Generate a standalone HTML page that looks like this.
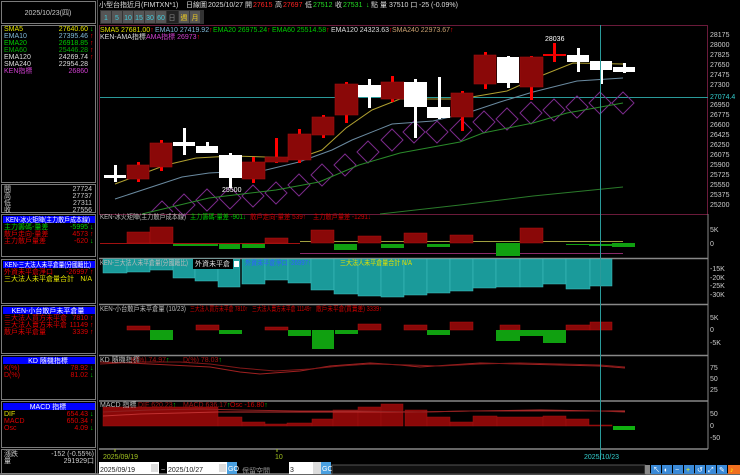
<!DOCTYPE html>
<html><head><meta charset="utf-8"><style>
html,body{margin:0;padding:0;background:#000;width:740px;height:475px;overflow:hidden}
svg{display:block}
text{font-family:"Liberation Sans","Noto Sans CJK TC",sans-serif;font-size:7px}
</style></head><body>
<svg width="740" height="475" viewBox="0 0 740 475" xmlns="http://www.w3.org/2000/svg">
<rect width="740" height="475" fill="#000"/>
<g fill="none" stroke="#7a7a7a" stroke-width="1">
<rect x="1.5" y="1.5" width="94" height="22"/>
<rect x="1.5" y="25.5" width="94" height="157"/>
<rect x="1.5" y="184.5" width="94" height="28"/>
<rect x="1.5" y="214.5" width="94" height="42"/>
<rect x="1.5" y="259.5" width="94" height="44"/>
<rect x="1.5" y="305.5" width="94" height="48"/>
<rect x="1.5" y="355.5" width="94" height="44"/>
<rect x="1.5" y="401.5" width="94" height="46"/>
<rect x="1.5" y="449.5" width="94" height="24"/>
</g>
<line x1="97.5" y1="0" x2="97.5" y2="475" stroke="#555"/>
<text x="48" y="15" fill="#ccc" text-anchor="middle" font-size="6">2025/10/23(四)</text>
<g font-size="5.5">
<text x="4" y="31" fill="#e0e000">SMA5</text><text x="88" y="31" fill="#e0e000" text-anchor="end">27640.60</text><text x="90" y="31" fill="#0c0">↓</text>
<text x="4" y="38" fill="#7fb8d8">EMA10</text><text x="88" y="38" fill="#7fb8d8" text-anchor="end">27395.46</text><text x="90" y="38" fill="#f00">↑</text>
<text x="4" y="45" fill="#0c0">EMA20</text><text x="88" y="45" fill="#0c0" text-anchor="end">26918.85</text><text x="90" y="45" fill="#f00">↑</text>
<text x="4" y="52" fill="#0a0">EMA60</text><text x="88" y="52" fill="#0a0" text-anchor="end">25446.28</text><text x="90" y="52" fill="#f00">↑</text>
<text x="4" y="59" fill="#ddd">EMA120</text><text x="88" y="59" fill="#ddd" text-anchor="end">24269.74</text><text x="90" y="59" fill="#f00">↑</text>
<text x="4" y="66" fill="#ddd">SMA240</text><text x="88" y="66" fill="#ddd" text-anchor="end">22954.28</text>
<text x="4" y="73" fill="#d040d0">KEN指標</text><text x="88" y="73" fill="#d040d0" text-anchor="end">26860</text>
<text x="4" y="191" fill="#ccc">開</text><text x="92" y="191" fill="#ccc" text-anchor="end">27724</text>
<text x="4" y="198" fill="#ccc">高</text><text x="92" y="198" fill="#ccc" text-anchor="end">27737</text>
<text x="4" y="205" fill="#ccc">低</text><text x="92" y="205" fill="#ccc" text-anchor="end">27311</text>
<text x="4" y="212" fill="#ccc">收</text><text x="92" y="212" fill="#ccc" text-anchor="end">27556</text>
</g>
<g font-size="5">
<rect x="3" y="216" width="92" height="7" fill="#0000ff"/><text x="48" y="222" fill="#fff" text-anchor="middle" textLength="84" lengthAdjust="spacingAndGlyphs">KEN-冰火矩陣(主力散戶成本線)</text>
<text x="4" y="229" fill="#0c0">主力籌碼-量差</text><text x="88" y="229" fill="#0c0" text-anchor="end">-5995</text><text x="90" y="229" fill="#0c0">↓</text>
<text x="4" y="236" fill="#d00">散戶走向-量差</text><text x="88" y="236" fill="#d00" text-anchor="end">4573</text><text x="90" y="236" fill="#f00">↑</text>
<text x="4" y="243" fill="#d00">主力散戶量差</text><text x="88" y="243" fill="#d00" text-anchor="end">-620</text><text x="90" y="243" fill="#0c0">↓</text>
<rect x="3" y="261" width="92" height="7" fill="#0000ff"/><text x="48" y="267" fill="#fff" text-anchor="middle" textLength="86" lengthAdjust="spacingAndGlyphs">KEN-三大法人未平倉量(分國籍比)</text>
<text x="4" y="274" fill="#d00">外資未平倉淨口</text><text x="88" y="274" fill="#d00" text-anchor="end">-26997</text><text x="90" y="274" fill="#f00">↑</text>
<text x="4" y="281" fill="#e0e000">三大法人未平倉量合計</text><text x="92" y="281" fill="#e0e000" text-anchor="end">N/A</text>
<rect x="3" y="307" width="92" height="7" fill="#0000ff"/><text x="48" y="313" fill="#fff" text-anchor="middle">KEN-小台散戶未平倉量</text>
<text x="4" y="320" fill="#d00">三大法人買方未平倉</text><text x="88" y="320" fill="#d00" text-anchor="end">7810</text><text x="90" y="320" fill="#f00">↑</text>
<text x="4" y="327" fill="#d00">三大法人賣方未平倉</text><text x="88" y="327" fill="#d00" text-anchor="end">11149</text><text x="90" y="327" fill="#f00">↑</text>
<text x="4" y="334" fill="#d00">散戶未平倉量</text><text x="88" y="334" fill="#d00" text-anchor="end">3339</text><text x="90" y="334" fill="#f00">↑</text>
<rect x="3" y="357" width="92" height="7" fill="#0000ff"/><text x="48" y="363" fill="#fff" text-anchor="middle">KD 隨機指標</text>
<text x="4" y="370" fill="#d00">K(%)</text><text x="88" y="370" fill="#d00" text-anchor="end">78.92</text><text x="90" y="370" fill="#0c0">↓</text>
<text x="4" y="377" fill="#d00">D(%)</text><text x="88" y="377" fill="#d00" text-anchor="end">81.02</text><text x="90" y="377" fill="#0c0">↓</text>
<rect x="3" y="403" width="92" height="7" fill="#0000ff"/><text x="48" y="409" fill="#fff" text-anchor="middle">MACD 指標</text>
<text x="4" y="416" fill="#e0e000">DIF</text><text x="88" y="416" fill="#d00" text-anchor="end">654.43</text><text x="90" y="416" fill="#0c0">↓</text>
<text x="4" y="423" fill="#d00">MACD</text><text x="88" y="423" fill="#d00" text-anchor="end">650.34</text><text x="90" y="423" fill="#f00">↑</text>
<text x="4" y="430" fill="#d00">Osc</text><text x="88" y="430" fill="#d00" text-anchor="end">4.09</text><text x="90" y="430" fill="#0c0">↓</text>
<text x="4" y="456" fill="#ccc">漲跌</text><text x="94" y="456" fill="#ccc" text-anchor="end">-152 (-0.55%)</text>
<text x="4" y="463" fill="#ccc">量</text><text x="94" y="463" fill="#ccc" text-anchor="end">291929口</text>
</g>
<text x="99" y="7" fill="#ddd">小型台指近月(FIMTXN*1)</text>
<text x="186" y="7" fill="#ddd">日線圖</text>
<text x="208" y="7" fill="#ddd">2025/10/27</text>
<text x="245" y="7" fill="#ddd">開</text><text x="253" y="7" fill="#f22">27615</text>
<text x="275" y="7" fill="#ddd">高</text><text x="283" y="7" fill="#f22">27697</text>
<text x="305" y="7" fill="#ddd">低</text><text x="313" y="7" fill="#2d2">27512</text>
<text x="335" y="7" fill="#ddd">收</text><text x="343" y="7" fill="#2d2">27531</text>
<text x="366" y="7" fill="#2d2">↓</text><text x="371" y="7" fill="#ddd">點</text>
<text x="380" y="7" fill="#ddd">量 37510 口</text><text x="419" y="7" fill="#ddd">-25 (-0.09%)</text>
<g font-size="7">
<rect x="100" y="10" width="104" height="14" fill="#333"/>
<g fill="#555"><rect x="101" y="11" width="10" height="12"/><rect x="112" y="11" width="10" height="12"/><rect x="123" y="11" width="10" height="12"/><rect x="134" y="11" width="10" height="12"/><rect x="145" y="11" width="10" height="12"/><rect x="156" y="11" width="10" height="12"/><rect x="179" y="11" width="10" height="12"/><rect x="190" y="11" width="10" height="12"/></g>
<rect x="167" y="11" width="11" height="12" fill="#222"/>
<g fill="#4cd" text-anchor="middle"><text x="106" y="20">1</text><text x="117" y="20">5</text><text x="128" y="20">10</text><text x="139" y="20">15</text><text x="150" y="20">30</text><text x="161" y="20">60</text><text x="172" y="20" fill="#888">日</text><text x="184" y="20" fill="#ec2">週</text><text x="195" y="20" fill="#ec2">月</text></g>
</g>
<rect x="99.5" y="25.5" width="608" height="189" fill="none" stroke="#6a1a3a"/>
<text x="100" y="32" fill="#e0e000" font-size="6">SMA5 27681.00<tspan fill="#f00">↑</tspan></text>
<text x="155" y="32" fill="#7fb8d8" font-size="6">EMA10 27419.92<tspan fill="#f00">↑</tspan></text>
<text x="213" y="32" fill="#0c0" font-size="6">EMA20 26975.24<tspan fill="#f00">↑</tspan></text>
<text x="272" y="32" fill="#0c0" font-size="6">EMA60 25514.58<tspan fill="#f00">↑</tspan></text>
<text x="331" y="32" fill="#ddd" font-size="6">EMA120 24323.63<tspan fill="#f00">↑</tspan></text>
<text x="392" y="32" fill="#c9a070" font-size="6">SMA240 22973.67<tspan fill="#f00">↑</tspan></text>
<text x="100" y="39" fill="#ddd" font-size="6">KEN-AMA指標</text>
<text x="146" y="39" fill="#d040d0" font-size="6">AMA指標 26973<tspan fill="#f00">↑</tspan></text>
<g fill="#ccc" font-size="6">
<text x="710" y="37">28175</text><text x="710" y="47">28000</text><text x="710" y="57">27825</text><text x="710" y="67">27650</text><text x="710" y="77">27475</text><text x="710" y="87">27300</text><text x="710" y="107">26950</text><text x="710" y="117">26775</text><text x="710" y="127">26600</text><text x="710" y="137">26425</text><text x="710" y="147">26250</text><text x="710" y="157">26075</text><text x="710" y="167">25900</text><text x="710" y="177">25725</text><text x="710" y="187">25550</text><text x="710" y="197">25375</text><text x="710" y="207">25200</text>
</g>
<text x="710" y="99" fill="#3cc" font-size="6">27074.4</text>
<line x1="100" y1="97.5" x2="708" y2="97.5" stroke="#2a9a9a"/>
<g fill="none" stroke="#7a2a8a" stroke-width="1">
<path d="M151 212l11-11 11 11M173 205l11-11 11 11 -11 11zM196 200l11-11 11 11 -11 11zM219 198l11-11 11 11 -11 11zM242 196l11-11 11 11 -11 11zM265 193l11-11 11 11 -11 11zM288 185l11-11 11 11 -11 11zM311 175l11-11 11 11 -11 11zM334 165l11-11 11 11 -11 11zM357 152l11-11 11 11 -11 11zM381 140l11-11 11 11 -11 11zM403 132l11-11 11 11 -11 11zM426 132l11-11 11 11 -11 11zM450 130l11-11 11 11 -11 11zM473 122l11-11 11 11 -11 11zM496 119l11-11 11 11 -11 11zM520 113l11-11 11 11 -11 11zM543 110l11-11 11 11 -11 11zM566 107l11-11 11 11 -11 11zM589 103l11-11 11 11 -11 11zM612 103l11-11 11 11 -11 11z"/>
</g>
<polyline fill="none" stroke="#2a7a2a" points="380,214 460,205 533,196 623,187"/>
<polyline fill="none" stroke="#2a8a2a" points="142,214 209,198 276,190 319,182 359,165 400,153 460,142 483,133 533,123 567,113 623,103"/>
<polyline fill="none" stroke="#6a8aa0" points="115,199 182,177 209,173 266,170 299,162 332,150 352,140 392,124 433,121 467,113 500,102 533,92 577,81 623,78"/>
<polyline fill="none" stroke="#b0a030" points="115,184 166,165 196,158 232,156 266,157 299,158 322,150 346,128 372,110 400,99 460,99 507,91 543,75 573,63 623,64"/>
<g fill="#f00">
<rect x="137" y="162" width="3" height="20"/><rect x="160" y="140" width="3" height="31"/><rect x="252" y="157" width="3" height="26"/><rect x="275" y="138" width="3" height="25"/><rect x="298" y="129" width="3" height="34"/><rect x="322" y="115" width="3" height="23"/><rect x="345" y="82" width="3" height="41"/><rect x="391" y="76" width="3" height="26"/><rect x="461" y="91" width="3" height="40"/><rect x="484" y="52" width="3" height="37"/><rect x="530" y="56" width="3" height="44"/><rect x="553" y="43" width="3" height="19"/>
</g>
<g fill="#8a0808" stroke="#a01010" stroke-width="0.6">
<rect x="127" y="165" width="22" height="14"/><rect x="150" y="143" width="22" height="24"/><rect x="242" y="162" width="23" height="17"/><rect x="265" y="157" width="23" height="5"/><rect x="288" y="134" width="23" height="26"/><rect x="312" y="117" width="22" height="18"/><rect x="335" y="84" width="23" height="31"/><rect x="381" y="82" width="23" height="17"/><rect x="451" y="93" width="22" height="24"/><rect x="474" y="55" width="22" height="29"/><rect x="520" y="57" width="23" height="30"/>
</g>
<rect x="543" y="54" width="23" height="2" fill="#e00"/>
<g fill="#fff">
<rect x="114" y="165" width="3" height="17"/><rect x="104" y="175" width="22" height="3"/>
<rect x="183" y="128" width="3" height="27"/><rect x="173" y="142" width="22" height="4"/>
<rect x="206" y="142" width="3" height="11"/><rect x="196" y="146" width="22" height="7"/>
<rect x="229" y="153" width="3" height="35"/><rect x="219" y="155" width="23" height="23"/>
<rect x="368" y="79" width="3" height="29"/><rect x="358" y="85" width="23" height="12"/>
<rect x="414" y="79" width="3" height="59"/><rect x="404" y="82" width="23" height="25"/>
<rect x="438" y="77" width="3" height="42"/><rect x="427" y="107" width="23" height="11"/>
<rect x="507" y="56" width="3" height="32"/><rect x="497" y="57" width="22" height="26"/>
<rect x="577" y="48" width="3" height="24"/><rect x="567" y="55" width="22" height="7"/>
<rect x="600" y="61" width="3" height="23"/><rect x="590" y="61" width="22" height="9"/>
<rect x="623" y="63" width="3" height="10"/><rect x="613" y="67" width="22" height="5"/>
</g>
<text x="222" y="192" fill="#fff" font-size="6">25500</text>
<text x="545" y="41" fill="#fff" font-size="6">28036</text>
<g stroke="#888" stroke-width="1.5"><line x1="99" y1="258.5" x2="708" y2="258.5"/><line x1="99" y1="304.5" x2="708" y2="304.5"/><line x1="99" y1="355.5" x2="708" y2="355.5"/><line x1="99" y1="401" x2="708" y2="401"/><line x1="99" y1="449" x2="708" y2="449"/><line x1="0" y1="474" x2="740" y2="474"/></g>
<line x1="708" y1="214" x2="708" y2="449" stroke="#888"/>
<line x1="300" y1="241.5" x2="623" y2="241.5" stroke="#a0a040"/>
<line x1="300" y1="253.5" x2="623" y2="253.5" stroke="#8a2a6a"/>
<line x1="100" y1="243.5" x2="300" y2="243.5" stroke="#a01010"/>
<g fill="#8a0808" stroke="#b01010" stroke-width="0.5">
<rect x="127" y="232" width="23" height="11"/><rect x="150" y="227" width="23" height="16"/><rect x="265" y="238" width="23" height="5"/><rect x="311" y="230" width="23" height="13"/><rect x="358" y="236" width="23" height="7"/><rect x="404" y="233" width="23" height="10"/><rect x="450" y="235" width="23" height="8"/><rect x="520" y="228" width="23" height="15"/>
</g>
<g fill="#10a010">
<rect x="173" y="244" width="45" height="2"/><rect x="219" y="244" width="21" height="5"/><rect x="242" y="244" width="23" height="4"/><rect x="334" y="244" width="23" height="6"/><rect x="381" y="244" width="23" height="4"/><rect x="427" y="244" width="23" height="3"/><rect x="496" y="243" width="24" height="13"/><rect x="566" y="244" width="23" height="1"/><rect x="589" y="244" width="23" height="2"/><rect x="612" y="243" width="23" height="4"/>
</g>
<text x="100" y="219" fill="#bbb" font-size="5.5" textLength="86" lengthAdjust="spacingAndGlyphs">KEN-冰火矩陣(主力散戶成本線)</text>
<text x="190" y="219" fill="#0c0" font-size="5.5" textLength="56" lengthAdjust="spacingAndGlyphs">主力籌碼-量差 -901↓</text>
<text x="250" y="219" fill="#c00" font-size="5.5" textLength="56" lengthAdjust="spacingAndGlyphs">散戶走向-量差 539↑</text>
<text x="313" y="219" fill="#c00" font-size="5.5" textLength="58" lengthAdjust="spacingAndGlyphs">主力散戶量差 -1291↓</text>
<g fill="#ccc" font-size="6"><text x="710" y="232">5K</text><text x="710" y="246">0</text></g>
<g fill="#1a9a9a" stroke="#40c0c0" stroke-width="0.5">
<rect x="103" y="259" width="24" height="14"/><rect x="127" y="259" width="23" height="13"/><rect x="150" y="259" width="23" height="11"/><rect x="173" y="259" width="22" height="19"/><rect x="195" y="259" width="23" height="22"/><rect x="218" y="259" width="22" height="28"/><rect x="242" y="259" width="23" height="25"/><rect x="265" y="259" width="23" height="21"/><rect x="288" y="259" width="23" height="24"/><rect x="311" y="259" width="23" height="31"/><rect x="334" y="259" width="24" height="35"/><rect x="358" y="259" width="23" height="37"/><rect x="381" y="259" width="23" height="38"/><rect x="404" y="259" width="23" height="36"/><rect x="427" y="259" width="23" height="34"/><rect x="450" y="259" width="23" height="32"/><rect x="473" y="259" width="23" height="29"/><rect x="496" y="259" width="24" height="28"/><rect x="520" y="259" width="23" height="28"/><rect x="543" y="259" width="23" height="25"/><rect x="566" y="259" width="24" height="30"/><rect x="590" y="259" width="22" height="27"/>
</g>
<text x="100" y="265" fill="#bbb" font-size="5.5" textLength="88" lengthAdjust="spacingAndGlyphs">KEN-三大法人未平倉量(分國籍比)</text>
<rect x="193" y="259" width="40" height="10" fill="#000"/><text x="195" y="266" fill="#ddd" font-size="6">外資未平倉</text><rect x="234" y="261" width="5" height="6" fill="#fff"/>
<text x="245" y="265" fill="#3060ff" font-size="5.5" textLength="66" lengthAdjust="spacingAndGlyphs">外資未平倉淨口 -26997↑</text>
<text x="340" y="265" fill="#e0e000" font-size="5.5" textLength="72" lengthAdjust="spacingAndGlyphs">三大法人未平倉量合計 N/A</text>
<g fill="#ccc" font-size="6"><text x="710" y="271">-15K</text><text x="710" y="280">-20K</text><text x="710" y="288">-25K</text><text x="710" y="297">-30K</text></g>
<g fill="#8a0808" stroke="#b01010" stroke-width="0.5">
<rect x="127" y="326" width="23" height="4"/><rect x="196" y="325" width="23" height="5"/><rect x="265" y="327" width="23" height="3"/><rect x="358" y="324" width="23" height="6"/><rect x="404" y="325" width="23" height="5"/><rect x="450" y="322" width="23" height="8"/><rect x="500" y="325" width="20" height="5"/><rect x="566" y="325" width="24" height="5"/><rect x="590" y="322" width="22" height="8"/>
</g>
<g fill="#10a010">
<rect x="150" y="330" width="23" height="10"/><rect x="219" y="330" width="23" height="4"/><rect x="288" y="330" width="23" height="6"/><rect x="312" y="330" width="22" height="19"/><rect x="335" y="330" width="23" height="4"/><rect x="427" y="330" width="23" height="5"/><rect x="496" y="330" width="24" height="11"/><rect x="520" y="330" width="23" height="6"/><rect x="543" y="330" width="23" height="13"/>
</g>
<text x="100" y="311" fill="#bbb" font-size="5.5" textLength="86" lengthAdjust="spacingAndGlyphs">KEN-小台散戶未平倉量 (10/23)</text>
<text x="190" y="311" fill="#c00" font-size="5.5" textLength="58" lengthAdjust="spacingAndGlyphs">三大法人買方未平倉 7810↑</text>
<text x="252" y="311" fill="#c00" font-size="5.5" textLength="60" lengthAdjust="spacingAndGlyphs">三大法人賣方未平倉 11149↑</text>
<text x="316" y="311" fill="#c00" font-size="5.5" textLength="66" lengthAdjust="spacingAndGlyphs">散戶未平倉(買賣差) 3339↑</text>
<g fill="#ccc" font-size="6"><text x="710" y="320">5K</text><text x="710" y="332">0</text><text x="710" y="345">-5K</text></g>
<polyline fill="none" stroke="#a02020" points="100,362 130,363 170,365 210,367 240,372 260,374 300,371 330,366 370,363 400,365 420,367 450,365 480,363 520,364 560,365 600,366 625,368"/>
<polyline fill="none" stroke="#801818" points="100,364 140,362 180,362 210,364 240,368 275,371 310,369 340,366 370,364 410,365 440,366 480,364 520,363 560,364 600,365 625,367"/>
<text x="100" y="362" fill="#bbb" font-size="5.5">KD 隨機指標</text>
<text x="131" y="362" fill="#a01010" font-size="5.5">K(%) 74.97<tspan fill="#0c0">↑</tspan></text>
<text x="183" y="362" fill="#a01010" font-size="5.5">D(%) 78.03<tspan fill="#0c0">↑</tspan></text>
<g fill="#ccc" font-size="6"><text x="710" y="370">75</text><text x="710" y="381">50</text><text x="710" y="392">25</text></g>
<g fill="#8a0808" stroke="#a01010" stroke-width="0.5">
<rect x="103" y="407" width="115" height="19"/><rect x="218" y="417" width="24" height="9"/><rect x="242" y="422" width="23" height="4"/><rect x="265" y="424" width="22" height="2"/><rect x="287" y="423" width="25" height="3"/><rect x="312" y="419" width="21" height="7"/><rect x="333" y="410" width="25" height="16"/><rect x="358" y="407" width="23" height="19"/><rect x="381" y="404" width="22" height="22"/><rect x="405" y="410" width="22" height="16"/><rect x="427" y="417" width="23" height="9"/><rect x="450" y="422" width="23" height="4"/><rect x="473" y="416" width="24" height="10"/><rect x="497" y="417" width="46" height="9"/><rect x="543" y="416" width="23" height="10"/><rect x="566" y="419" width="23" height="7"/><rect x="589" y="425" width="23" height="1"/>
</g>
<rect x="613" y="426" width="22" height="4" fill="#10b010"/>
<polyline fill="none" stroke="#c03030" points="103,416 140,414 180,413 218,412 240,412 300,412 360,412 420,412 470,411 540,410 600,411 625,411"/>
<polyline fill="none" stroke="#902020" points="103,412 150,410 200,409 240,410 300,411 360,411 420,412 470,411 540,411 600,411 625,412"/>
<text x="100" y="407" fill="#bbb" font-size="5.5">MACD 指標</text>
<text x="138" y="407" fill="#a01010" font-size="5.5">DIF 620.23<tspan fill="#0c0">↑</tspan></text>
<text x="183" y="407" fill="#a01010" font-size="5.5">MACD 636.17<tspan fill="#0c0">↑</tspan></text>
<text x="230" y="407" fill="#c00" font-size="5.5">Osc -16.80<tspan fill="#0c0">↑</tspan></text>
<g fill="#ccc" font-size="6"><text x="710" y="416">50</text><text x="710" y="428">0</text><text x="710" y="440">-50</text></g>
<line x1="600.5" y1="25" x2="600.5" y2="460" stroke="#2a9a9a"/>
<line x1="115" y1="449" x2="115" y2="452" stroke="#a0c020"/><line x1="277" y1="449" x2="277" y2="452" stroke="#a0c020"/>
<text x="103" y="459" fill="#a0c020" font-size="6">2025/09/19</text>
<text x="275" y="459" fill="#a0c020" font-size="6">10</text>
<text x="584" y="459" fill="#3cc" font-size="6">2025/10/23</text>
<rect x="99" y="462" width="60" height="12" fill="#fff"/><text x="100" y="472" fill="#222" font-size="10" font-family="Liberation Serif">2025/09/19</text>
<rect x="151" y="464" width="7" height="8" fill="#ddd"/>
<text x="161" y="472" fill="#ccc" font-size="8">~</text>
<rect x="167" y="462" width="60" height="12" fill="#fff"/><text x="168" y="472" fill="#222" font-size="10" font-family="Liberation Serif">2025/10/27</text>
<rect x="219" y="464" width="7" height="8" fill="#ddd"/>
<rect x="227" y="462" width="10" height="12" fill="#4aa0e0"/><text x="228" y="471" fill="#fff" font-size="6">GO</text>
<text x="242" y="473" fill="#999" font-size="11">保留空間</text>
<rect x="289" y="462" width="24" height="12" fill="#fff"/><text x="290" y="472" fill="#222" font-size="10">3</text>
<rect x="313" y="462" width="8" height="12" fill="#ddd"/>
<rect x="321" y="462" width="10" height="12" fill="#4aa0e0"/><text x="322" y="471" fill="#fff" font-size="6">GO</text>
<rect x="332" y="465" width="313" height="9" fill="#111" stroke="#555"/>
<rect x="645" y="465" width="5" height="9" fill="#888"/>
<g fill="#3a8ad8"><rect x="651" y="465" width="10" height="9"/><rect x="662" y="465" width="10" height="9"/><rect x="673" y="465" width="10" height="9"/><rect x="684" y="465" width="10" height="9"/><rect x="695" y="465" width="10" height="9"/><rect x="706" y="465" width="10" height="9"/><rect x="717" y="465" width="10" height="9"/></g>
<rect x="728" y="465" width="12" height="9" fill="#f07020"/>
<g fill="#fff" font-size="7"><text x="653" y="472">↖</text><text x="664" y="472">◐</text><text x="675" y="472">−</text><text x="686" y="472" fill="#ff0">+</text><text x="697" y="472">↺</text><text x="708" y="472">⤢</text><text x="719" y="472">✎</text><text x="730" y="472" fill="#ff0">♪</text></g>
</svg>
</body></html>
